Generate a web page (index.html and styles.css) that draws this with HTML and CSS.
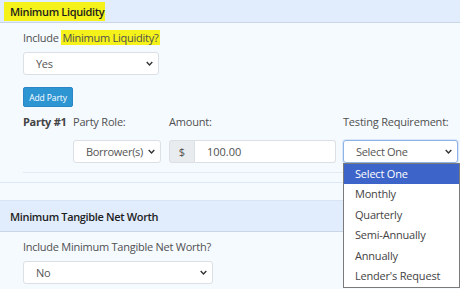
FILE: index.html
```html
<!DOCTYPE html>
<html lang="en">
<head>
  <meta charset="UTF-8">
  <meta name="viewport" content="width=device-width, initial-scale=1.0">
  <title>Covenants</title>
  <link rel="stylesheet" href="styles.css">
</head>
<body>
  <div class="page">
    <!-- Minimum Liquidity -->
    <div class="section">
      <div class="section-header first">
        <span class="title"><mark>Minimum Liquidity</mark></span>
      </div>
      <div class="section-body">
        <div class="field-label">Include <mark>Minimum Liquidity?</mark></div>
        <div class="select w-136">
          <span>Yes</span>
          <svg class="chevron" viewBox="0 0 10 6"><polyline points="1,1 5,5 9,1"></polyline></svg>
        </div>
        <button class="btn-add">Add Party</button>

        <div class="party-row">
          <div class="party-num">Party #1</div>
          <div class="col">
            <div class="col-label">Party Role:</div>
            <div class="select">
              <span>Borrower(s)</span>
              <svg class="chevron" viewBox="0 0 10 6"><polyline points="1,1 5,5 9,1"></polyline></svg>
            </div>
          </div>
          <div class="col">
            <div class="col-label">Amount:</div>
            <div class="input-group">
              <span class="addon">$</span>
              <span class="input">100.00</span>
            </div>
          </div>
          <div class="col testing">
            <div class="col-label">Testing Requirement:</div>
            <div class="select focused">
              <span>Select One</span>
              <svg class="chevron" viewBox="0 0 10 6"><polyline points="1,1 5,5 9,1"></polyline></svg>
            </div>
            <ul class="dropdown">
              <li class="active">Select One</li>
              <li>Monthly</li>
              <li>Quarterly</li>
              <li>Semi-Annually</li>
              <li>Annually</li>
              <li>Lender's Request</li>
            </ul>
          </div>
        </div>
        <div class="divider"></div>
      </div>
    </div>

    <!-- Minimum Tangible Net Worth -->
    <div class="section">
      <div class="section-header">
        <span class="title">Minimum Tangible Net Worth</span>
      </div>
      <div class="section-body">
        <div class="field-label">Include Minimum Tangible Net Worth?</div>
        <div class="select w-190">
          <span>No</span>
          <svg class="chevron" viewBox="0 0 10 6"><polyline points="1,1 5,5 9,1"></polyline></svg>
        </div>
      </div>
    </div>
  </div>
</body>
</html>
```

FILE: styles.css
```css
body {
  margin: 0;
  padding: 0;
  background-color: #f5faff;
  font-family: "Open Sans", "Noto Sans", Arial, sans-serif;
  font-size: 11px;
  color: #505050;
  overflow: hidden;
}
mark {
  background-color: #f4f21a;
  color: inherit;
  padding: 0 1px;
}
.section {
  border-bottom: 1px solid #dbe8f8;
  margin-bottom: 17px;
}
.section-header {
  height: 30px;
  display: flex;
  align-items: center;
  padding-left: 10px;
  background-color: #e1edfd;
  border-top: 1px solid #d6e4f6;
  border-bottom: 1px solid #c8d6e8;
}
.section-header.first {
  height: 22px;
  border-top: none;
}
.title {
  font-weight: 600;
  font-size: 11px;
  color: #1d1d1d;
  letter-spacing: -0.35px;
}
.section-header.first .title mark {
  padding: 2px 1px 2px 6px;
  margin-left: -6px;
}
.section-body {
  padding: 8px 2px 9px 23px;
}
.field-label {
  height: 14px;
  line-height: 14px;
  letter-spacing: -0.25px;
  margin-bottom: 7px;
  white-space: nowrap;
}
.select {
  box-sizing: border-box;
  height: 23px;
  display: flex;
  align-items: center;
  justify-content: space-between;
  padding: 0 5px 0 12px;
  background-color: #fff;
  border: 1px solid #dcdfe3;
  border-radius: 3px;
  color: #555;
  letter-spacing: -0.3px;
  white-space: nowrap;
}
.w-136 { width: 136px; }
.w-190 { width: 190px; }
.chevron {
  width: 7px;
  height: 5px;
  fill: none;
  stroke: #333;
  stroke-width: 2;
  flex-shrink: 0;
}
.btn-add {
  display: block;
  margin-top: 12px;
  width: 50px;
  height: 20px;
  padding: 0;
  border: 1px solid #2a86c4;
  border-radius: 2px;
  background-color: #2e95d3;
  color: #fff;
  font-family: inherit;
  font-size: 8.5px;
  letter-spacing: -0.1px;
}
.party-row {
  display: flex;
  margin-top: 8px;
}
.party-num {
  width: 50px;
  font-weight: 700;
  color: #444;
  line-height: 14px;
  letter-spacing: -0.3px;
  white-space: nowrap;
}
.col {
  display: flex;
  flex-direction: column;
  margin-right: 7px;
}
.col:nth-child(2) { width: 88px; margin-right: 8px; }
.col:nth-child(3) { width: 167px; }
.col.testing { width: 115px; margin-right: 0; position: relative; }
.col-label {
  line-height: 14px;
  margin-bottom: 11px;
  letter-spacing: -0.2px;
  white-space: nowrap;
}
.input-group {
  display: flex;
  height: 23px;
  box-sizing: border-box;
}
.addon {
  width: 24px;
  display: flex;
  align-items: center;
  justify-content: center;
  background-color: #e9ecef;
  border: 1px solid #dcdfe3;
  border-radius: 3px 0 0 3px;
}
.input {
  flex: 1;
  display: flex;
  align-items: center;
  padding-left: 12px;
  background-color: #fff;
  border: 1px solid #dcdfe3;
  border-left: none;
  border-radius: 0 3px 3px 0;
}
.select.focused {
  border-color: #8fb3e6;
  box-shadow: 0 0 0 1px #dbe7f8;
}
.dropdown {
  position: absolute;
  top: 48px;
  left: 0;
  width: 117px;
  margin: 0;
  padding: 0 0 1px 0;
  list-style: none;
  background-color: #fff;
  border: 1px solid #7a7a7a;
  box-sizing: border-box;
  z-index: 10;
}
.dropdown li {
  height: 20.4px;
  line-height: 20.4px;
  padding-left: 11px;
  color: #444;
  letter-spacing: -0.2px;
  white-space: nowrap;
}
.dropdown li.active {
  background-color: #3c64c9;
  color: #fff;
}
.divider {
  height: 1px;
  margin-top: 9px;
  background-color: #e2e9f1;
}
```
